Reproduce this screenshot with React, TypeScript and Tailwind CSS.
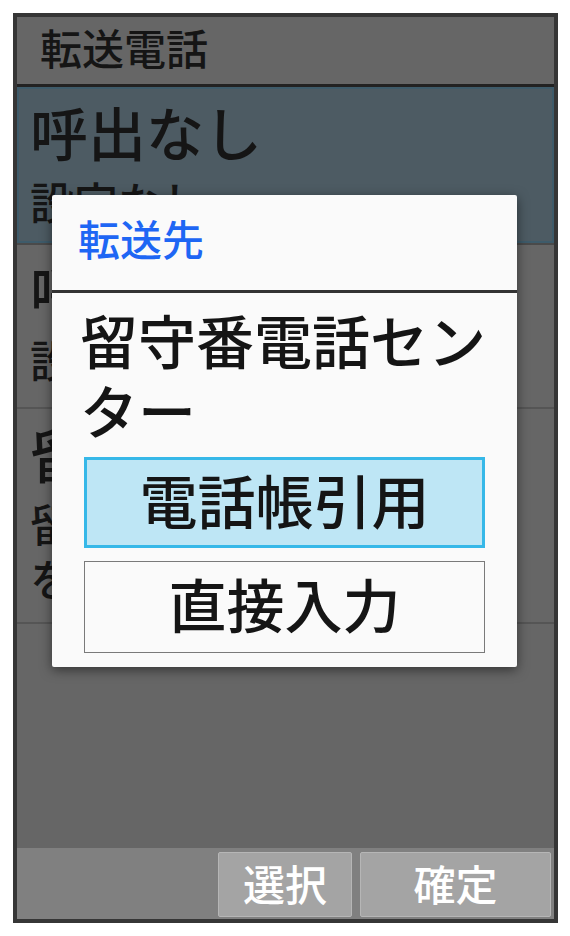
export default function App() {
  return (
    <div className="min-h-screen bg-white pl-[13px] pt-[13px] font-['Noto_Sans_CJK_JP','Noto_Sans_CJK_SC',sans-serif] font-medium text-[#151515]">
      {/* phone screen */}
      <div className="relative flex h-[910px] w-[545px] flex-col border-4 border-[#363636] bg-[#666666]">
        <header className="flex h-[70px] shrink-0 items-center border-b-[3px] border-[#222222] bg-[#666666] pb-[8px] pl-[23px] text-[42px] leading-none">
          転送電話
        </header>

        {/* selected row */}
        <div className="h-[156px] shrink-0 border-2 border-[#3e5b6a] bg-[#4d5b63] pl-[11px] pt-[7px]">
          <div className="text-[58px] leading-[70px]">呼出なし</div>
          <div className="mt-[8px] text-[44px] leading-[55px]">設定なし</div>
        </div>
        <div className="h-[2px] shrink-0 bg-[#4a4a4a]" />

        <div className="h-[164px] shrink-0 border-b-2 border-[#555555] pl-[13px] pt-[9px]">
          <div className="text-[58px] leading-[70px]">呼出あり</div>
          <div className="mt-[8px] text-[44px] leading-[55px]">設定なし</div>
        </div>

        <div className="h-[215px] shrink-0 border-b-2 border-[#555555] pl-[13px] pt-[9px]">
          <div className="text-[58px] leading-[70px]">留守番電話</div>
          <div className="mt-[8px] text-[44px] leading-[55px]">
            留守番電話センター
            <br />
            を設定中
          </div>
        </div>

        <div className="flex-1" />

        {/* soft keys */}
        <div className="flex h-[71px] shrink-0 items-start justify-end gap-[8px] bg-[#808080] pr-[3px] pt-[4px]">
          <button className="flex h-[65px] w-[134px] items-center justify-center rounded-[2px] border border-[#b6b6b6] bg-[#a4a4a4] pb-[4px] text-[42px] font-medium leading-none text-white">
            選択
          </button>
          <button className="flex h-[65px] w-[191px] items-center justify-center rounded-[2px] border border-[#b6b6b6] bg-[#a4a4a4] pb-[4px] text-[42px] font-medium leading-none text-white">
            確定
          </button>
        </div>

        {/* dialog */}
        <div className="absolute left-[35px] top-[178px] flex h-[472px] w-[465px] flex-col rounded-[2px] bg-[#fafafa] shadow-[0_3px_12px_rgba(0,0,0,0.5)]">
          <div className="flex h-[95px] shrink-0 items-center pb-[10px] pl-[26px] text-[42px] leading-none text-[#1e66f4]">
            転送先
          </div>
          <div className="h-[3px] shrink-0 bg-[#333333]" />
          <div className="pl-[28px] pt-[11px] text-[58px] leading-[70px]">
            留守番電話セン
            <br />
            ター
          </div>
          <div className="mx-[32px] mt-[13px] flex h-[91px] shrink-0 items-center justify-center border-[3px] border-[#36b8e8] bg-[#bee6f5] pb-[8px] text-[58px] leading-none">
            電話帳引用
          </div>
          <div className="mx-[32px] mt-[13px] flex h-[92px] shrink-0 items-center justify-center border border-[#7a7a7a] bg-[#fafafa] pb-[8px] text-[58px] leading-none">
            直接入力
          </div>
        </div>
      </div>
    </div>
  );
}
